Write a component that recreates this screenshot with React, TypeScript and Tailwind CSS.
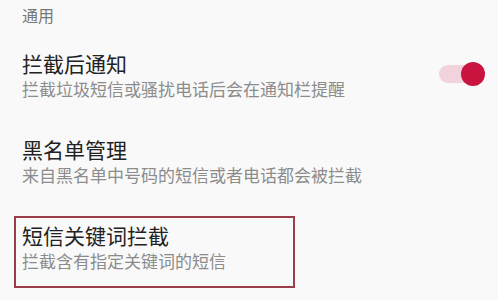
const font = { fontFamily: '"Noto Sans CJK SC", "Noto Sans", sans-serif' };

function Toggle() {
  return (
    <div className="relative w-[47px] h-[24px] mr-[12px] mb-[5px] shrink-0">
      <div className="absolute left-0 right-[2px] top-[3px] h-[18px] rounded-full bg-[#f2d3db]" />
      <div className="absolute right-[1px] top-0 w-[24px] h-[24px] rounded-full bg-[#c8143f]" />
    </div>
  );
}

function Item({ title, desc, right }: { title: string; desc: string; right?: React.ReactNode }) {
  return (
    <div className="flex items-center">
      <div className="flex-1 pl-[22px]">
        <div className="text-[21px] leading-[26px] text-[#222222]">{title}</div>
        <div className="text-[17px] leading-[26px] text-[#8c8c8c]">{desc}</div>
      </div>
      {right}
    </div>
  );
}

export default function App() {
  return (
    <div className="w-[498px] h-[300px] bg-[#f9f9f9] overflow-hidden pt-[4px]" style={font}>
      <div className="pl-[22px] text-[16px] leading-[22px] text-[#777777]">通用</div>
      <div className="mt-[24px] flex flex-col gap-[34px]">
        <Item title="拦截后通知" desc="拦截垃圾短信或骚扰电话后会在通知栏提醒" right={<Toggle />} />
        <Item title="黑名单管理" desc="来自黑名单中号码的短信或者电话都会被拦截" />
        <div className="relative">
          <Item title="短信关键词拦截" desc="拦截含有指定关键词的短信" />
          <div className="absolute left-[14px] top-[-6px] w-[281px] h-[72px] border-2 border-[#9c3d4b]" />
        </div>
      </div>
    </div>
  );
}
